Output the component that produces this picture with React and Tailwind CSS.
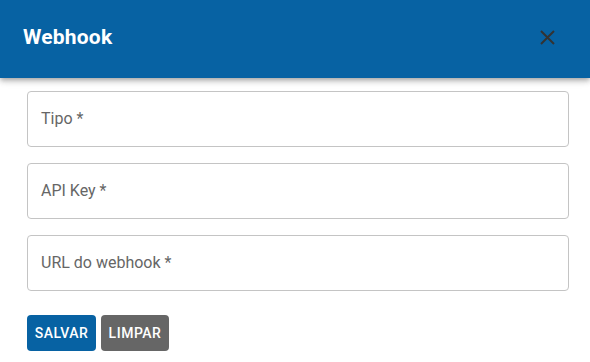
import React from "react";

function Field({ label }) {
  return (
    <div className="h-[56px] w-full rounded-[4px] border border-[#c4c4c4] bg-white flex items-center px-[13px]">
      <span className="text-[16px] text-[#666666] leading-none">{label}</span>
    </div>
  );
}

export default function App() {
  return (
    <div className="w-[590px] h-[362px] bg-white overflow-hidden" style={{ fontFamily: "Roboto, 'Noto Sans', sans-serif" }}>
      <div className="relative z-10 h-[78px] bg-[#0762a3] flex items-center justify-between pl-[23px] pr-[35px] pb-[3px] shadow-[0_2px_4px_-1px_rgba(0,0,0,0.2),0_4px_5px_0_rgba(0,0,0,0.14),0_1px_10px_0_rgba(0,0,0,0.12)]">
        <h2 className="text-[21px] font-bold text-white leading-none tracking-[0.2px]">Webhook</h2>
        <svg width="15" height="15" viewBox="0 0 15 15">
          <path d="M1 1 L14 14 M14 1 L1 14" stroke="#333" strokeWidth="2" />
        </svg>
      </div>
      <div className="px-[27px] pt-[13px] pr-[21px] flex flex-col gap-[16px]">
        <Field label="Tipo *" />
        <Field label="API Key *" />
        <Field label="URL do webhook *" />
        <div className="flex gap-[5px] mt-[8px]">
          <button className="h-[36px] w-[69px] rounded-[4px] bg-[#0762a3] text-white text-[14px] font-medium uppercase tracking-[0.5px]">Salvar</button>
          <button className="h-[36px] w-[68px] rounded-[4px] bg-[#666666] text-white text-[14px] font-medium uppercase tracking-[0.5px]">Limpar</button>
        </div>
      </div>
    </div>
  );
}
